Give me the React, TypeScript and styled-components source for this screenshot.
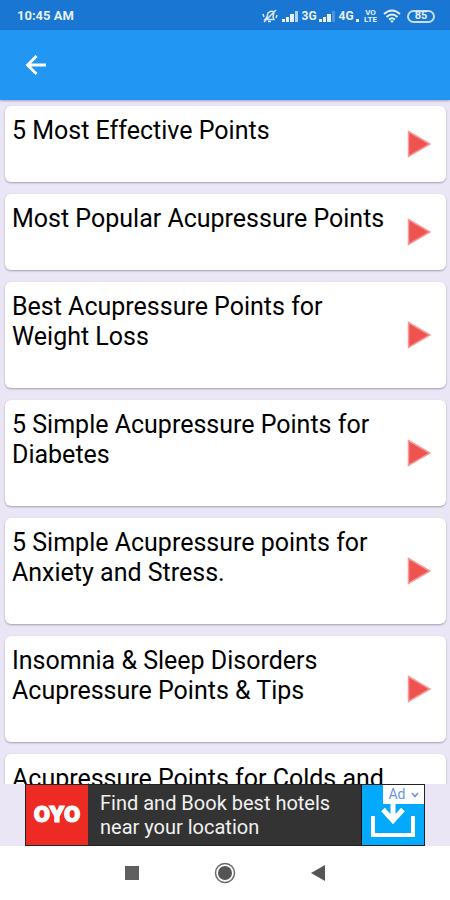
import React from "react";
import styled, { createGlobalStyle } from "styled-components";

const GlobalStyle = createGlobalStyle`
  * { box-sizing: border-box; }
  body { margin: 0; font-family: Roboto, "Liberation Sans", sans-serif; }
  button { font-family: inherit; border: 0; padding: 0; margin: 0; background: none; cursor: pointer; }
`;

const Screen = styled.div`
  display: flex;
  flex-direction: column;
  height: 100vh;
  background: #eae6f5;
`;

const StatusBar = styled.div`
  display: flex;
  flex: none;
  align-items: center;
  justify-content: space-between;
  height: 30px;
  padding: 2px 15px 0 17px;
  background: #1976d2;
  color: #e6f1fc;
`;

const Clock = styled.time`
  font-size: 13px;
  font-weight: 700;
  line-height: 16px;
`;

const StatusIcons = styled.div`
  display: flex;
  align-items: center;
`;

const StatusIcon = styled.svg<{ $gap?: number }>`
  display: block;
  margin-left: ${({ $gap }) => $gap ?? 0}px;
`;

const Network = styled.span`
  width: 20px;
  text-align: center;
  font-size: 12px;
  font-weight: 700;
  line-height: 16px;
`;

const VoLte = styled.span`
  margin-left: 4px;
  font-size: 8px;
  font-weight: 700;
  line-height: 7px;
  text-align: center;
`;

const Battery = styled.span`
  display: flex;
  align-items: center;
  justify-content: center;
  width: 28px;
  height: 13px;
  margin-left: 6px;
  border: 2px solid #c5ddf5;
  border-radius: 7px;
  font-size: 11px;
  font-weight: 700;
  line-height: 10px;
`;

const AppBar = styled.header`
  display: flex;
  flex: none;
  align-items: center;
  height: 70px;
  padding: 0 20px;
  background: #2196f3;
  box-shadow: 0 1px 2px rgba(60, 60, 110, 0.4);
`;

const BackButton = styled.button`
  display: grid;
  place-items: center;
  width: 32px;
  height: 32px;
`;

const TopicList = styled.ul`
  display: flex;
  flex: 1;
  flex-direction: column;
  gap: 12px;
  min-height: 0;
  margin: 0;
  padding: 6px 4px 6px 5px;
  overflow-y: auto;
  scrollbar-width: none;
  list-style: none;
`;

const TopicItem = styled.li`
  flex: none;
`;

const TopicCard = styled.button`
  display: flex;
  align-items: center;
  justify-content: space-between;
  width: 100%;
  padding-right: 14px;
  border-radius: 6px;
  background: #fff;
  box-shadow: 0 1px 2px rgba(60, 50, 80, 0.4);
  color: #000;
  text-align: left;
`;

const TopicTitle = styled.span`
  flex: 1;
  padding: 10px 16px 36px 7px;
  font-size: 25px;
  line-height: 30px;
`;

const BannerArea = styled.aside`
  display: flex;
  flex: none;
  justify-content: center;
  height: 62px;
  padding: 0 25px;
`;

const Banner = styled.a`
  display: flex;
  width: 100%;
  border: 1px solid #222;
  background: #333;
  color: #f1f1f1;
  text-decoration: none;
`;

const Brand = styled.span`
  display: grid;
  flex: none;
  place-items: center;
  width: 62px;
  background: #ee2a24;
  color: #fff;
  font-family: Inter, sans-serif;
  font-size: 21px;
  font-weight: 900;
  line-height: 26px;
  -webkit-text-stroke: 1px #fff;
`;

const BannerText = styled.span`
  flex: 1;
  align-self: center;
  padding: 0 20px 0 12px;
  font-size: 20px;
  line-height: 24px;
`;

const Download = styled.span`
  display: flex;
  flex: none;
  flex-direction: column;
  align-items: center;
  width: 63px;
  border-left: 1px solid #111;
  background: #03a9fc;
`;

const AdTag = styled.span`
  display: flex;
  align-items: center;
  align-self: flex-end;
  justify-content: center;
  gap: 5px;
  width: 41px;
  height: 19px;
  background: #fff;
  color: #6797dc;
  font-size: 14px;
  line-height: 19px;
`;

const NavBar = styled.nav`
  display: flex;
  flex: none;
  align-items: center;
  justify-content: center;
  gap: 61px;
  height: 54px;
  background: #fff;
`;

const NavButton = styled.button`
  display: grid;
  place-items: center;
  width: 32px;
  height: 32px;
`;

const topics = [
  "5 Most Effective Points",
  "Most Popular Acupressure Points",
  "Best Acupressure Points for Weight Loss",
  "5 Simple Acupressure Points for Diabetes",
  "5 Simple Acupressure points for Anxiety and Stress.",
  "Insomnia & Sleep Disorders Acupressure Points & Tips",
  "Acupressure Points for Colds and Flu",
];

const MutedBell = () => (
  <StatusIcon width="16" height="14" viewBox="0 0 16 14" fill="none" stroke="#d5e7fa" strokeWidth="1.500">
    <path d="M3 10.500L5 8l1-4q3-3 6-1l-1 5 1 2.500zM6 12.500h3M2 13L14 1M1 5l1 3M15 6l-1 3" />
  </StatusIcon>
);

const Signal = ({ weak = false, gap = 0 }: { weak?: boolean; gap?: number }) => (
  <StatusIcon $gap={gap} width="17" height="12" viewBox="0 0 17 12" fill="#e6f1fc">
    <path d="M0 9h3v3H0zM4 7h3v5H4zM8 4h4v8H8z" />
    <path d="M13 1h3v11h-3z" opacity={weak ? 0.25 : 0.75} />
  </StatusIcon>
);

const Wifi = () => (
  <StatusIcon $gap={6} width="18" height="14" viewBox="0 0 18 14" fill="none" stroke="#e6f1fc" strokeWidth="2">
    <path d="M1 5Q9-2 17 5M3.500 8Q9 3 14.500 8M6 10.500Q9 8 12 10.500" />
    <path d="M7 11.500h4L9 14z" fill="#e6f1fc" stroke="none" />
  </StatusIcon>
);

const PlayIcon = () => (
  <svg width="25" height="28" viewBox="0 0 25 28" aria-hidden="true">
    <path d="M1.500 1.500L23 14L1.500 26.500z" fill="#ef5350" stroke="#f49a98" strokeWidth="1.500" />
  </svg>
);

export default function App() {
  return (
    <Screen>
      <GlobalStyle />
      <StatusBar>
        <Clock>10:45 AM</Clock>
        <StatusIcons>
          <MutedBell />
          <Signal gap={4} />
          <Network>3G</Network>
          <Signal weak />
          <Network>4G</Network>
          <StatusIcon width="4" height="12" viewBox="0 0 4 12" fill="#e6f1fc">
            <path d="M0 9h3v3H0z" />
          </StatusIcon>
          <VoLte>VO<br />LTE</VoLte>
          <Wifi />
          <Battery>85</Battery>
        </StatusIcons>
      </StatusBar>
      <AppBar>
        <BackButton aria-label="Back">
          <svg width="22" height="22" viewBox="0 0 22 22" fill="none" stroke="#fff" strokeWidth="2.800">
            <path d="M21 11H2.500M11.500 2L2.500 11l9 9" />
          </svg>
        </BackButton>
      </AppBar>
      <TopicList>
        {topics.map((topic) => (
          <TopicItem key={topic}>
            <TopicCard>
              <TopicTitle>{topic}</TopicTitle>
              <PlayIcon />
            </TopicCard>
          </TopicItem>
        ))}
      </TopicList>
      <BannerArea>
        <Banner href="#hotels">
          <Brand>OYO</Brand>
          <BannerText>Find and Book best hotels near your location</BannerText>
          <Download>
            <AdTag>
              Ad
              <svg width="8" height="6" viewBox="0 0 8 6" fill="none" stroke="#6797dc" strokeWidth="1.500">
                <path d="M1 1l3 3.500L7 1" />
              </svg>
            </AdTag>
            <svg width="44" height="34" viewBox="0 0 44 34" fill="none" stroke="#fff" aria-hidden="true">
              <path d="M2 12v19h40V12" strokeWidth="4" />
              <path d="M22 0v17M12 5.500l10 11 10-11" strokeWidth="5" />
            </svg>
          </Download>
        </Banner>
      </BannerArea>
      <NavBar aria-label="System">
        <NavButton aria-label="Recent apps">
          <svg width="14" height="14" viewBox="0 0 14 14"><path d="M0 0h14v14H0z" fill="#5f5f5f" /></svg>
        </NavButton>
        <NavButton aria-label="Home">
          <svg width="22" height="22" viewBox="0 0 22 22">
            <circle cx="11" cy="11" r="9.500" fill="none" stroke="#6b6b6b" strokeWidth="1.500" />
            <circle cx="11" cy="11" r="7" fill="#555" />
          </svg>
        </NavButton>
        <NavButton aria-label="Go back">
          <svg width="14" height="16" viewBox="0 0 14 16"><path d="M14 0v16L0 8z" fill="#555" /></svg>
        </NavButton>
      </NavBar>
    </Screen>
  );
}
